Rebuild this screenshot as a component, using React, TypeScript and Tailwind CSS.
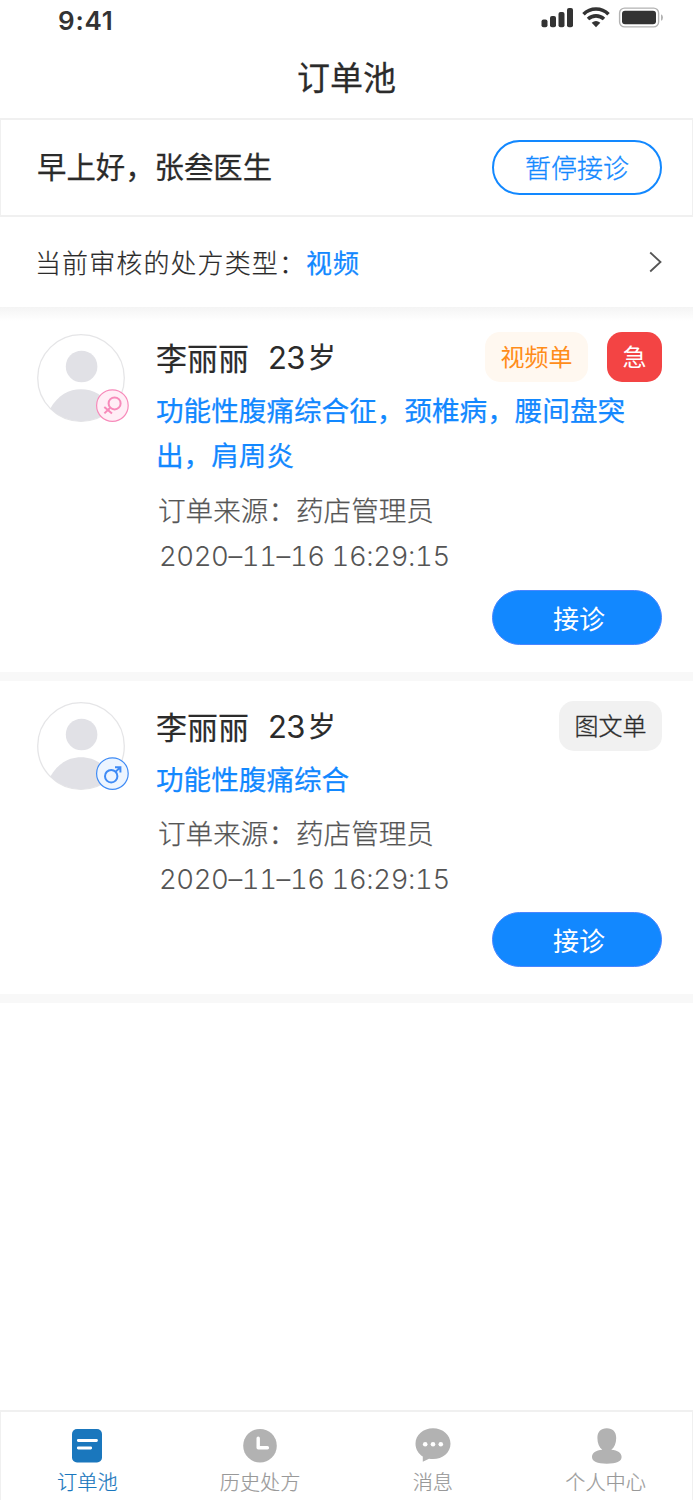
import type { ReactNode } from 'react';

interface Order {
  id: number;
  name: string;
  age: string;
  gender: 'female' | 'male';
  diagnosis: string;
  source: string;
  time: string;
  type: 'video' | 'text';
  urgent: boolean;
}

const orders: Order[] = [
  {
    id: 1,
    name: '李丽丽',
    age: '23',
    gender: 'female',
    diagnosis: '功能性腹痛综合征，颈椎病，腰间盘突出，肩周炎',
    source: '药店管理员',
    time: '2020–11–16 16:29:15',
    type: 'video',
    urgent: true,
  },
  {
    id: 2,
    name: '李丽丽',
    age: '23',
    gender: 'male',
    diagnosis: '功能性腹痛综合',
    source: '药店管理员',
    time: '2020–11–16 16:29:15',
    type: 'text',
    urgent: false,
  },
];

const StatusBar = () => (
  <div className="flex h-10 items-start justify-between pl-[58px] pr-[29px]">
    <span className="pt-[6px] font-['Inter'] text-[26px] leading-[30px] font-semibold tracking-[0.8px] text-[#333]">9:41</span>
    <svg className="mt-[6px] h-[24px] w-[124px]" viewBox="540 6 124 24" fill="#333">
      <rect x="541.5" y="19.5" width="6" height="7.7" rx="2" />
      <rect x="550" y="16" width="6" height="11.2" rx="2" />
      <rect x="558.5" y="12" width="6" height="15.2" rx="2" />
      <rect x="567" y="8" width="6" height="19.2" rx="2" />
      <path d="M583.5 14.2C590.5 7.3 601.5 7.3 608.5 14.2" fill="none" stroke="#333" strokeWidth="3.6" />
      <path d="M588 19C592.6 14.8 599.4 14.8 604 19" fill="none" stroke="#333" strokeWidth="3.6" />
      <path d="M591.7 22.8Q596 19.2 600.3 22.8L596 27.2Z" />
      <rect x="619.6" y="8.1" width="39" height="18.8" rx="5" fill="none" stroke="#b3b3b3" strokeWidth="1.4" />
      <rect x="622" y="10.7" width="34" height="13.6" rx="3" />
      <path d="M661 14.2Q663 15 663 17.5Q663 20 661 20.8Z" fill="#b3b3b3" />
    </svg>
  </div>
);

const Avatar = ({ gender }: { gender: Order['gender'] }) => (
  <svg className="h-[90px] w-[94px] shrink-0" viewBox="36 333 94 90" fill="none">
    <clipPath id={`avatar-${gender}`}>
      <circle cx="81" cy="378" r="43.4" />
    </clipPath>
    <circle cx="81" cy="378" r="43.3" fill="#fff" stroke="#e5e5e7" strokeWidth="1.3" />
    <circle cx="81.6" cy="366.5" r="15.8" fill="#e1e1e6" />
    <path clipPath={`url(#avatar-${gender})`} d="M50 409C58 395 69 389.3 81 389.3C93 389.3 104 395 112 409V423H50Z" fill="#e1e1e6" />
    {gender === 'female' ? (
      <g stroke="#f78aba">
        <circle cx="112.4" cy="405.6" r="15.8" fill="#ffeef6" strokeWidth="1.2" />
        <circle cx="114.6" cy="403.4" r="6" strokeWidth="2" />
        <path d="M110.2 407.8L104.4 413.4M104.3 407L112 413.6" strokeWidth="2" />
      </g>
    ) : (
      <g stroke="#3f8bf5">
        <circle cx="112.4" cy="405.6" r="15.8" fill="#edf5ff" strokeWidth="1.2" />
        <circle cx="111.2" cy="408.2" r="6.2" strokeWidth="2" />
        <path d="M115.5 403.9L120.6 399M115 399.2H120.4V404.6" strokeWidth="2" />
      </g>
    )}
  </svg>
);

const OrderCard = ({ order }: { order: Order }) => (
  <section className="group border-b-[9px] border-[#f8f8f8] pr-[31px] pb-[27px] pl-9">
    <div className="flex">
      <div className="pt-5">
        <Avatar gender={order.gender} />
      </div>
      <div className="ml-[26px] flex-1 pt-[19px] group-last:pt-5">
        <div className="flex h-[50px] items-center">
          <h2 className="flex h-[52px] items-start text-[31px] leading-[51px] font-normal text-[#2b2b2b] [-webkit-text-stroke:0.2px]">
            {order.name}
            <span className="ml-[19px] pt-px font-['Inter'] text-[31px] tracking-[-0.7px] [-webkit-text-stroke:0px]">{order.age}</span>
            <span className="ml-[3px] text-[28px]">岁</span>
          </h2>
          <div className="ml-auto flex gap-[19px] text-[24px] leading-[48px]">
            {order.type === 'video' ? (
              <span className="h-[50px] w-[103px] rounded-[15px] bg-[#fff8f0] text-center text-[#ff8d1a]">视频单</span>
            ) : (
              <span className="h-[50px] w-[103px] rounded-[15px] bg-[#f1f1f1] text-center font-light text-[#2b2b2b] [-webkit-text-stroke:0.35px]">图文单</span>
            )}
            {order.urgent && <span className="h-[50px] w-[55px] rounded-[15px] bg-[#f34444] text-center text-white">急</span>}
          </div>
        </div>
        <p className="mt-[5px] w-[480px] text-[27.6px] leading-[44.5px] text-[#1288ff] [-webkit-text-stroke:0.25px]">{order.diagnosis}</p>
        <p className="mt-[10px] ml-[2px] text-[27.6px] leading-[46px] font-light text-[#555] [-webkit-text-stroke:0.25px] group-last:mt-[8px]">
          订单来源：{order.source}
        </p>
        <p className="ml-[3px] pt-[3px] font-['Inter'] text-[27.5px] leading-[43px] font-light tracking-[-0.42px] text-[#555] tabular-nums">
          {order.time}
        </p>
      </div>
    </div>
    <div className="mt-[12px] flex justify-end group-last:mt-[11px]">
      <button className="h-[55px] w-[170px] rounded-full border border-[#4a86ff] bg-[#1288ff] pl-1 text-[26px] leading-[53px] text-white">接诊</button>
    </div>
  </section>
);

const TabItem = ({ label, active, children }: { label: string; active?: boolean; children: ReactNode }) => (
  <div className={`flex flex-1 flex-col items-center pt-[15px] ${active ? 'text-[#1a77bd]' : 'text-[#999]'}`}>
    <svg className="h-10 w-10" viewBox="0 0 40 40" fill={active ? '#1a77bd' : '#b2b2b2'}>
      {children}
    </svg>
    <span className="text-[20.2px] leading-[29px] font-light [-webkit-text-stroke:0.2px]">{label}</span>
  </div>
);

const TabBar = () => (
  <nav className="mt-auto flex h-[90px] border-x border-t-2 border-[#f0f0f0] bg-white">
    <TabItem label="订单池" active>
      <rect x="5" y="2" width="30" height="33.4" rx="5" />
      <path d="M11.3 13.5H29.5M11.3 21H23.7" stroke="#fff" strokeWidth="2.8" strokeLinecap="round" />
    </TabItem>
    <TabItem label="历史处方">
      <circle cx="20" cy="18.7" r="16.8" />
      <path d="M18.2 11.2V20.7H27.4" stroke="#fff" strokeWidth="3.4" strokeLinecap="round" strokeLinejoin="round" fill="none" />
    </TabItem>
    <TabItem label="消息">
      <path d="M20 1.3C10.3 1.3 2.5 8 2.5 16.7C2.5 22 5.4 26.7 9.8 29.5V34.8L16 31.7C17.3 32 18.6 32.1 20 32.1C29.7 32.1 37.5 25.3 37.5 16.7C37.5 8 29.7 1.3 20 1.3Z" />
      <g fill="#fff">
        <circle cx="12.2" cy="17.2" r="2.3" />
        <circle cx="20" cy="17.2" r="2.3" />
        <circle cx="27.8" cy="17.2" r="2.3" />
      </g>
    </TabItem>
    <TabItem label="个人中心">
      <path d="M20.8 1.3C14.8 1.3 11.4 4.8 11.4 11C11.4 16.5 13.2 20.3 16.3 22.7C9.8 23.2 6 25.8 6 30C6 34.5 11.3 36.7 20.8 36.7C30.3 36.7 35.6 34.5 35.6 30C35.6 25.8 31.8 23.2 25.3 22.7C28.4 20.3 30.2 16.5 30.2 11C30.2 4.8 26.8 1.3 20.8 1.3Z" />
    </TabItem>
  </nav>
);

export default function App() {
  return (
    <div className="flex h-[1500px] w-[693px] flex-col overflow-hidden bg-white font-['Noto_Sans_CJK_SC',sans-serif] text-[#2b2b2b]">
      <StatusBar />
      <h1 className="h-[78px] text-center text-[33px] leading-[72px] font-normal [-webkit-text-stroke:0.25px]">订单池</h1>

      <div className="flex h-[99px] items-center justify-between border-x border-y-2 border-[#f0f0f0] pr-[30px] pl-9">
        <p className="pb-[5px] text-[29.4px] leading-[44px] [-webkit-text-stroke:0.25px]">早上好，张叁医生</p>
        <button className="h-[55px] w-[170px] rounded-full border-2 border-[#1288ff] pb-0.5 text-[26px] leading-[49px] font-light text-[#1288ff] [-webkit-text-stroke:0.3px]">
          暂停接诊
        </button>
      </div>

      <div className="flex h-[90px] items-center bg-white pr-[30px] pl-[35px] text-[26px] tracking-[1.1px]">
        <span className="pb-[2px] font-light [-webkit-text-stroke:0.2px]">当前审核的处方类型：</span>
        <span className="pb-[2px] text-[#1288ff] [-webkit-text-stroke:0.25px]">视频</span>
        <svg className="ml-auto h-[22px] w-[14px]" viewBox="0 0 14 22" fill="none" stroke="#555" strokeWidth="1.8">
          <path d="M1.2 1.5L11.5 11L1.2 20.5" />
        </svg>
      </div>
      <div className="h-[14px] shrink-0 bg-linear-to-b from-[#f4f4f4] to-white" />

      <main className="-mt-[8px]">
        {orders.map((order) => (
          <OrderCard key={order.id} order={order} />
        ))}
      </main>

      <TabBar />
    </div>
  );
}
